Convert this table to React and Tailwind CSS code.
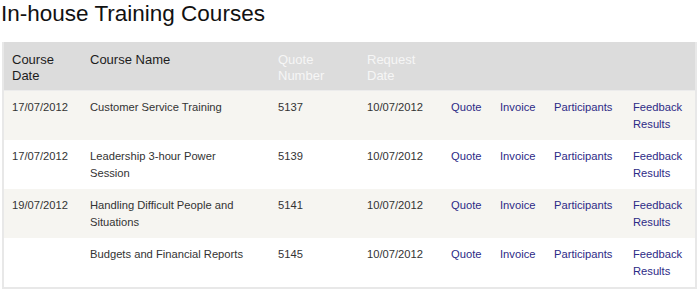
const courses = [
  { date: '17/07/2012', name: 'Customer Service Training', quote: '5137', requested: '10/07/2012' },
  { date: '17/07/2012', name: 'Leadership 3-hour Power Session', quote: '5139', requested: '10/07/2012' },
  { date: '19/07/2012', name: 'Handling Difficult People and Situations', quote: '5141', requested: '10/07/2012' },
  { date: '', name: 'Budgets and Financial Reports', quote: '5145', requested: '10/07/2012' },
]

const cols = 'grid grid-cols-[76px_188px_89px_84px_49px_54px_79px_1fr]'

function LinkCell({ children }) {
  return (
    <div className="pl-[10px] pr-[6px]">
      <a href="#" className="text-[#2d2a86] no-underline">{children}</a>
    </div>
  )
}

export default function App() {
  return (
    <div className="h-[291px] w-[700px] bg-white font-['Liberation_Sans',Arial,sans-serif]">
      <h1 className="pl-[1px] pt-[1px] text-[22.5px] leading-[26px] text-[#111]">In-house Training Courses</h1>

      <div className="ml-[2px] mt-[15px] w-[695px] border-2 border-t-0 border-[#e8e8e8]">
        <div className={`${cols} h-[49px] border-b border-[#ececec] bg-[#dcdcdc] pt-[10px] text-[13px] leading-[16px]`}>
          <div className="pl-[8px] pr-[10px] text-[#1c1c1c]">Course Date</div>
          <div className="pl-[10px] text-[#1c1c1c]">Course Name</div>
          <div className="pl-[10px] pr-[20px] text-[#f6f6f6]">Quote Number</div>
          <div className="pl-[10px] pr-[20px] text-[#f6f6f6]">Request Date</div>
          <div />
          <div />
          <div />
          <div />
        </div>

        {courses.map((c, i) => (
          <div
            key={c.quote}
            className={`${cols} h-[49px] pt-[8px] text-[11.2px] leading-[17px] text-[#333] ${i % 2 === 0 ? 'bg-[#f6f5f1]' : 'bg-white'}`}
          >
            <div className="pl-[8px]">{c.date}</div>
            <div className="pl-[10px] pr-[20px]">{c.name}</div>
            <div className="pl-[10px]">{c.quote}</div>
            <div className="pl-[10px]">{c.requested}</div>
            <LinkCell>Quote</LinkCell>
            <LinkCell>Invoice</LinkCell>
            <LinkCell>Participants</LinkCell>
            <div className="pl-[10px] pr-[12px]">
              <a href="#" className="text-[#2d2a86] no-underline">Feedback Results</a>
            </div>
          </div>
        ))}
      </div>
    </div>
  )
}
